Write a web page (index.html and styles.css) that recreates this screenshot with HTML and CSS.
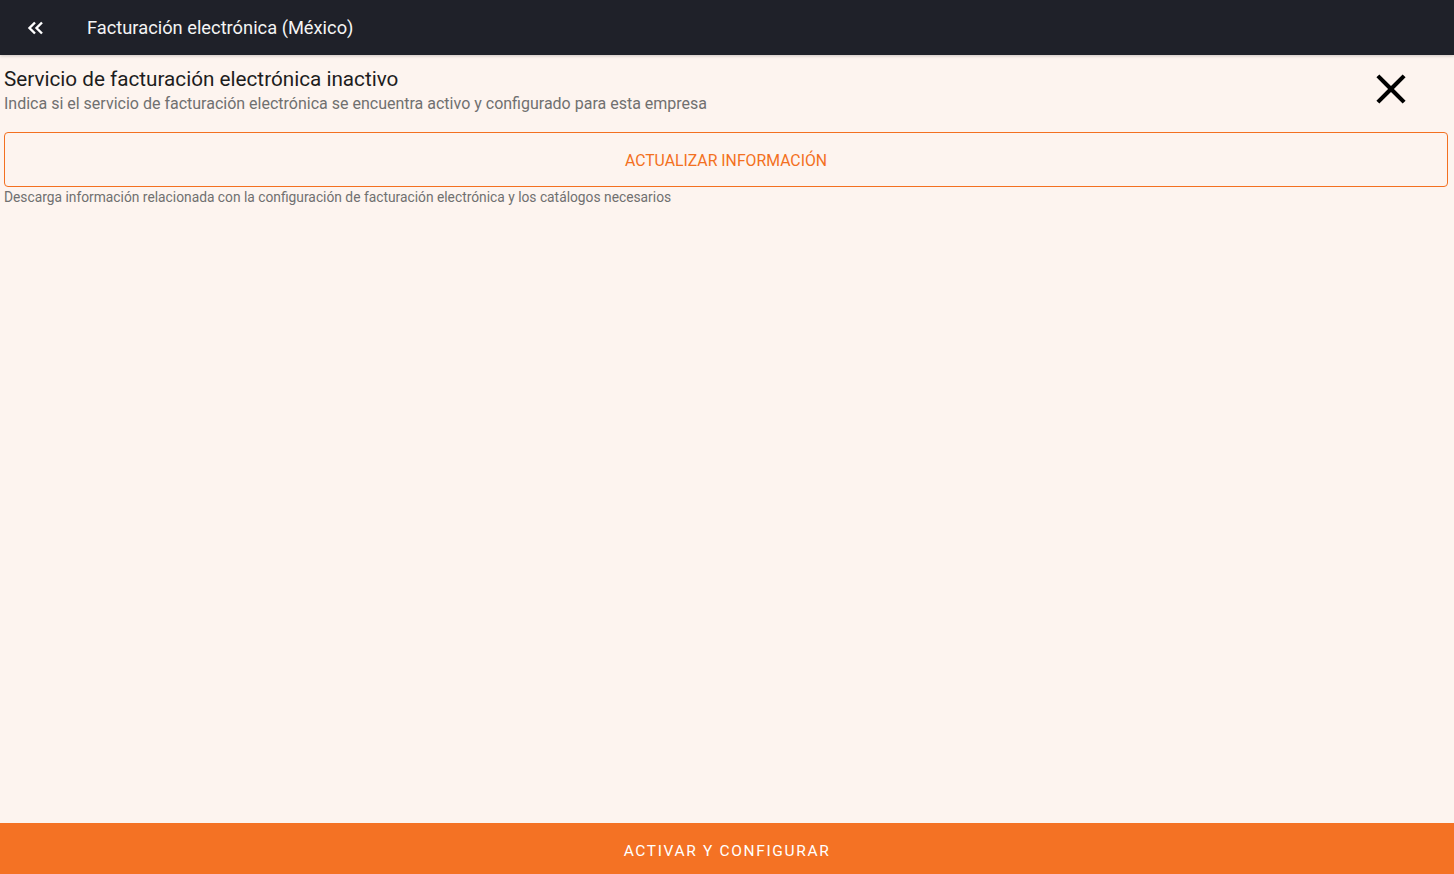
FILE: index.html
```html
<!DOCTYPE html>
<html lang="es">
<head>
    <meta charset="UTF-8">
    <meta name="viewport" content="width=device-width, initial-scale=1.0">
    <title>Facturación electrónica (México)</title>
    <link rel="stylesheet" href="styles.css">
</head>
<body>
    <div class="app">
        <header class="topbar">
            <button class="back-btn" aria-label="Volver">
                <svg width="24" height="24" viewBox="0 0 24 24">
                    <path d="M11 6.5 L5.5 12 L11 17.5 M18 6.5 L12.5 12 L18 17.5" fill="none" stroke="#fff" stroke-width="2.4"/>
                </svg>
            </button>
            <h1 class="topbar-title">Facturación electrónica (México)</h1>
        </header>

        <main class="content">
            <div class="status-row">
                <div class="status-text">
                    <div class="status-title">Servicio de facturación electrónica inactivo</div>
                    <div class="status-desc">Indica si el servicio de facturación electrónica se encuentra activo y configurado para esta empresa</div>
                </div>
                <div class="status-icon">
                    <svg width="50" height="50" viewBox="0 0 24 24">
                        <path d="M19 6.41 17.59 5 12 10.59 6.41 5 5 6.41 10.59 12 5 17.59 6.41 19 12 13.41 17.59 19 19 17.59 13.41 12z" fill="#000"/>
                    </svg>
                </div>
            </div>

            <button class="outline-btn">ACTUALIZAR INFORMACIÓN</button>
            <div class="helper">Descarga información relacionada con la configuración de facturación electrónica y los catálogos necesarios</div>
        </main>

        <button class="bottom-btn">ACTIVAR Y CONFIGURAR</button>
    </div>
</body>
</html>
```

FILE: styles.css
```css
*{
    margin: 0;
    padding: 0;
    box-sizing: border-box;
}
body{
    font-family: Roboto, "Liberation Sans", sans-serif;
    background-color: #fdf4ef;
}
.app{
    height: 874px;
    display: flex;
    flex-direction: column;
}
.topbar{
    height: 55px;
    background-color: #1f2129;
    display: flex;
    align-items: center;
    box-shadow: 0 1px 3px rgba(0,0,0,0.2);
}
.back-btn{
    width: 72px;
    height: 55px;
    background: none;
    border: none;
    display: flex;
    align-items: center;
    padding-left: 24px;
}
.topbar-title{
    margin-left: 15px;
    font-size: 18.3px;
    font-weight: 400;
    color: #f4f4f4;
}
.content{
    flex: 1;
    padding: 11px 6px 0 4px;
}
.status-row{
    display: flex;
    justify-content: space-between;
}
.status-title{
    font-size: 20.7px;
    color: #1d1d1d;
    line-height: 26px;
}
.status-desc{
    font-size: 16px;
    color: #707070;
    line-height: 24px;
}
.status-icon{
    margin: -2px 32px 0 0;
    height: 50px;
}
.outline-btn{
    display: block;
    width: 100%;
    height: 55px;
    margin-top: 16px;
    padding-top: 1px;
    border: 1px solid #f37021;
    border-radius: 4px;
    background: none;
    color: #f37021;
    font-family: Roboto, "Liberation Sans", sans-serif;
    font-size: 15.8px;
}
.helper{
    margin-top: 1px;
    font-size: 13.8px;
    color: #707070;
    line-height: 18px;
}
.bottom-btn{
    height: 51px;
    border: none;
    padding-top: 5px;
    background-color: #f47224;
    color: #ffffff;
    font-family: Roboto, "Liberation Sans", sans-serif;
    font-size: 15.5px;
    letter-spacing: 1.65px;
}
```
